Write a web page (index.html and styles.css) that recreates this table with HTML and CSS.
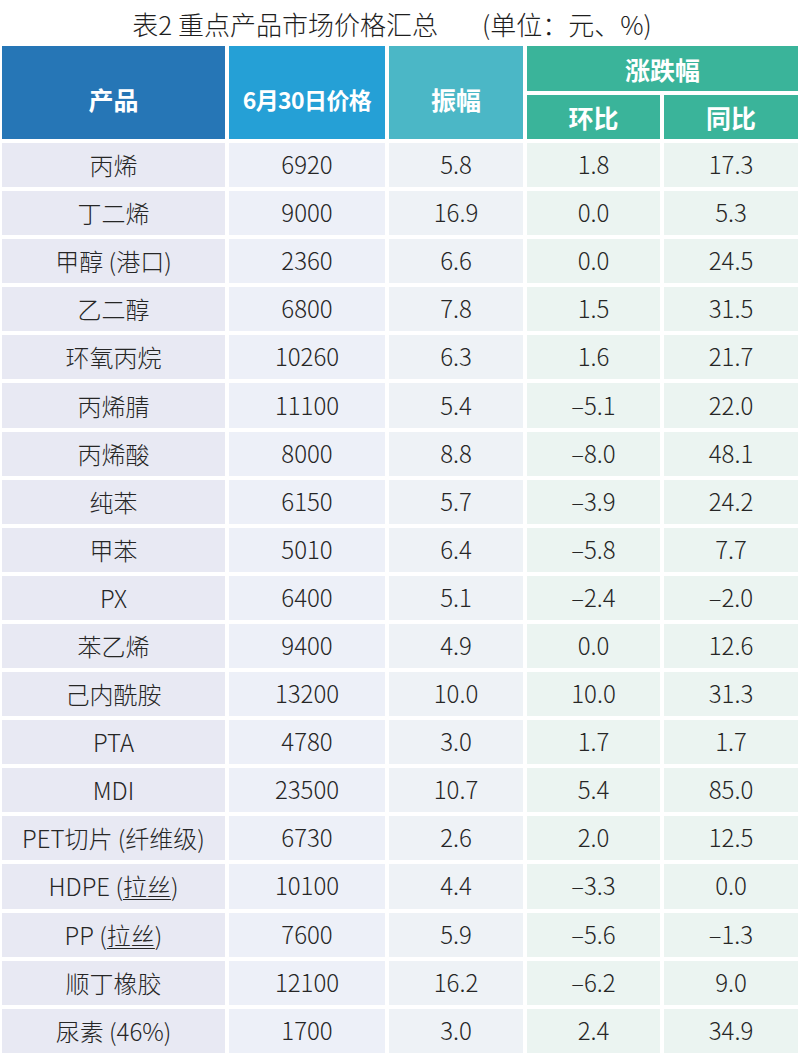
FILE: index.html
```html
<!DOCTYPE html>
<html lang="zh">
<head>
<meta charset="utf-8">
<title>表2 重点产品市场价格汇总</title>
<link rel="stylesheet" href="styles.css">
</head>
<body>
<div class="page">
  <div class="title"><span class="t-main">表2 重点产品市场价格汇总</span><span class="t-unit">(单位：元、%)</span></div>
  <div class="table">
    <div class="h h1 span2">产品</div>
    <div class="h h2 span2">6月30日价格</div>
    <div class="h h3 span2">振幅</div>
    <div class="h h4 top">涨跌幅</div>
    <div class="h h4 sub">环比</div>
    <div class="h h4 sub">同比</div>

    <div class="c c1">丙烯</div><div class="c c2">6920</div><div class="c c3">5.8</div><div class="c c4">1.8</div><div class="c c5">17.3</div>
    <div class="c c1">丁二烯</div><div class="c c2">9000</div><div class="c c3">16.9</div><div class="c c4">0.0</div><div class="c c5">5.3</div>
    <div class="c c1">甲醇 (港口)</div><div class="c c2">2360</div><div class="c c3">6.6</div><div class="c c4">0.0</div><div class="c c5">24.5</div>
    <div class="c c1">乙二醇</div><div class="c c2">6800</div><div class="c c3">7.8</div><div class="c c4">1.5</div><div class="c c5">31.5</div>
    <div class="c c1">环氧丙烷</div><div class="c c2">10260</div><div class="c c3">6.3</div><div class="c c4">1.6</div><div class="c c5">21.7</div>
    <div class="c c1">丙烯腈</div><div class="c c2">11100</div><div class="c c3">5.4</div><div class="c c4">–5.1</div><div class="c c5">22.0</div>
    <div class="c c1">丙烯酸</div><div class="c c2">8000</div><div class="c c3">8.8</div><div class="c c4">–8.0</div><div class="c c5">48.1</div>
    <div class="c c1">纯苯</div><div class="c c2">6150</div><div class="c c3">5.7</div><div class="c c4">–3.9</div><div class="c c5">24.2</div>
    <div class="c c1">甲苯</div><div class="c c2">5010</div><div class="c c3">6.4</div><div class="c c4">–5.8</div><div class="c c5">7.7</div>
    <div class="c c1">PX</div><div class="c c2">6400</div><div class="c c3">5.1</div><div class="c c4">–2.4</div><div class="c c5">–2.0</div>
    <div class="c c1">苯乙烯</div><div class="c c2">9400</div><div class="c c3">4.9</div><div class="c c4">0.0</div><div class="c c5">12.6</div>
    <div class="c c1">己内酰胺</div><div class="c c2">13200</div><div class="c c3">10.0</div><div class="c c4">10.0</div><div class="c c5">31.3</div>
    <div class="c c1">PTA</div><div class="c c2">4780</div><div class="c c3">3.0</div><div class="c c4">1.7</div><div class="c c5">1.7</div>
    <div class="c c1">MDI</div><div class="c c2">23500</div><div class="c c3">10.7</div><div class="c c4">5.4</div><div class="c c5">85.0</div>
    <div class="c c1">PET切片 (纤维级)</div><div class="c c2">6730</div><div class="c c3">2.6</div><div class="c c4">2.0</div><div class="c c5">12.5</div>
    <div class="c c1">HDPE (<span class="ul">拉丝</span>)</div><div class="c c2">10100</div><div class="c c3">4.4</div><div class="c c4">–3.3</div><div class="c c5">0.0</div>
    <div class="c c1">PP (<span class="ul">拉丝</span>)</div><div class="c c2">7600</div><div class="c c3">5.9</div><div class="c c4">–5.6</div><div class="c c5">–1.3</div>
    <div class="c c1">顺丁橡胶</div><div class="c c2">12100</div><div class="c c3">16.2</div><div class="c c4">–6.2</div><div class="c c5">9.0</div>
    <div class="c c1">尿素 (46%)</div><div class="c c2">1700</div><div class="c c3">3.0</div><div class="c c4">2.4</div><div class="c c5">34.9</div>
  </div>
</div>
</body>
</html>
```

FILE: styles.css
```css
html, body {
  margin: 0;
  padding: 0;
  background: #ffffff;
}

.page {
  width: 800px;
  font-family: "Noto Sans CJK SC", sans-serif;
  color: #262626;
}

.title {
  height: 46px;
  display: flex;
  justify-content: center;
  align-items: center;
  font-family: "Noto Sans CJK SC", sans-serif;
  font-weight: 300;
  font-size: 26px;
  color: #1e1e1e;
  padding-right: 16px;
  box-sizing: border-box;
}

.t-unit {
  margin-left: 44px;
}

.table {
  display: grid;
  grid-template-columns: 223px 156px 134px 133px 134px;
  grid-template-rows: 45px 44px repeat(19, 44.1px);
  gap: 4px;
  margin-left: 2px;
  background: #ffffff;
}

.h {
  display: flex;
  justify-content: center;
  align-items: center;
  color: #ffffff;
  font-family: "Noto Sans CJK SC", sans-serif;
  font-weight: 700;
  font-size: 25px;
}

.span2 {
  grid-row: span 2;
  padding-top: 12px;
  box-sizing: border-box;
}

.h1 { background: #2676b6; }
.h2 { background: #25a0d6; font-size: 23px; letter-spacing: -0.6px; }
.h3 { background: #4bb7c6; }
.h4 { background: #3ab49a; }

.top {
  grid-column: span 2;
}

.c {
  display: flex;
  justify-content: center;
  align-items: center;
  padding-bottom: 3px;
  box-sizing: border-box;
  font-family: "Noto Sans CJK SC", sans-serif;
  font-weight: 300;
  font-size: 24px;
  color: #262626;
}

.c1 { background: #e8e9f3; padding-bottom: 1px; }
.c2 { background: #edf0f8; }
.c3 { background: #eef2f6; }
.c4 { background: #ebf4f1; }
.c5 { background: #ebf4f1; }

.ul {
  text-decoration: underline;
  text-underline-offset: 3px;
  text-decoration-thickness: 1px;
}
```
